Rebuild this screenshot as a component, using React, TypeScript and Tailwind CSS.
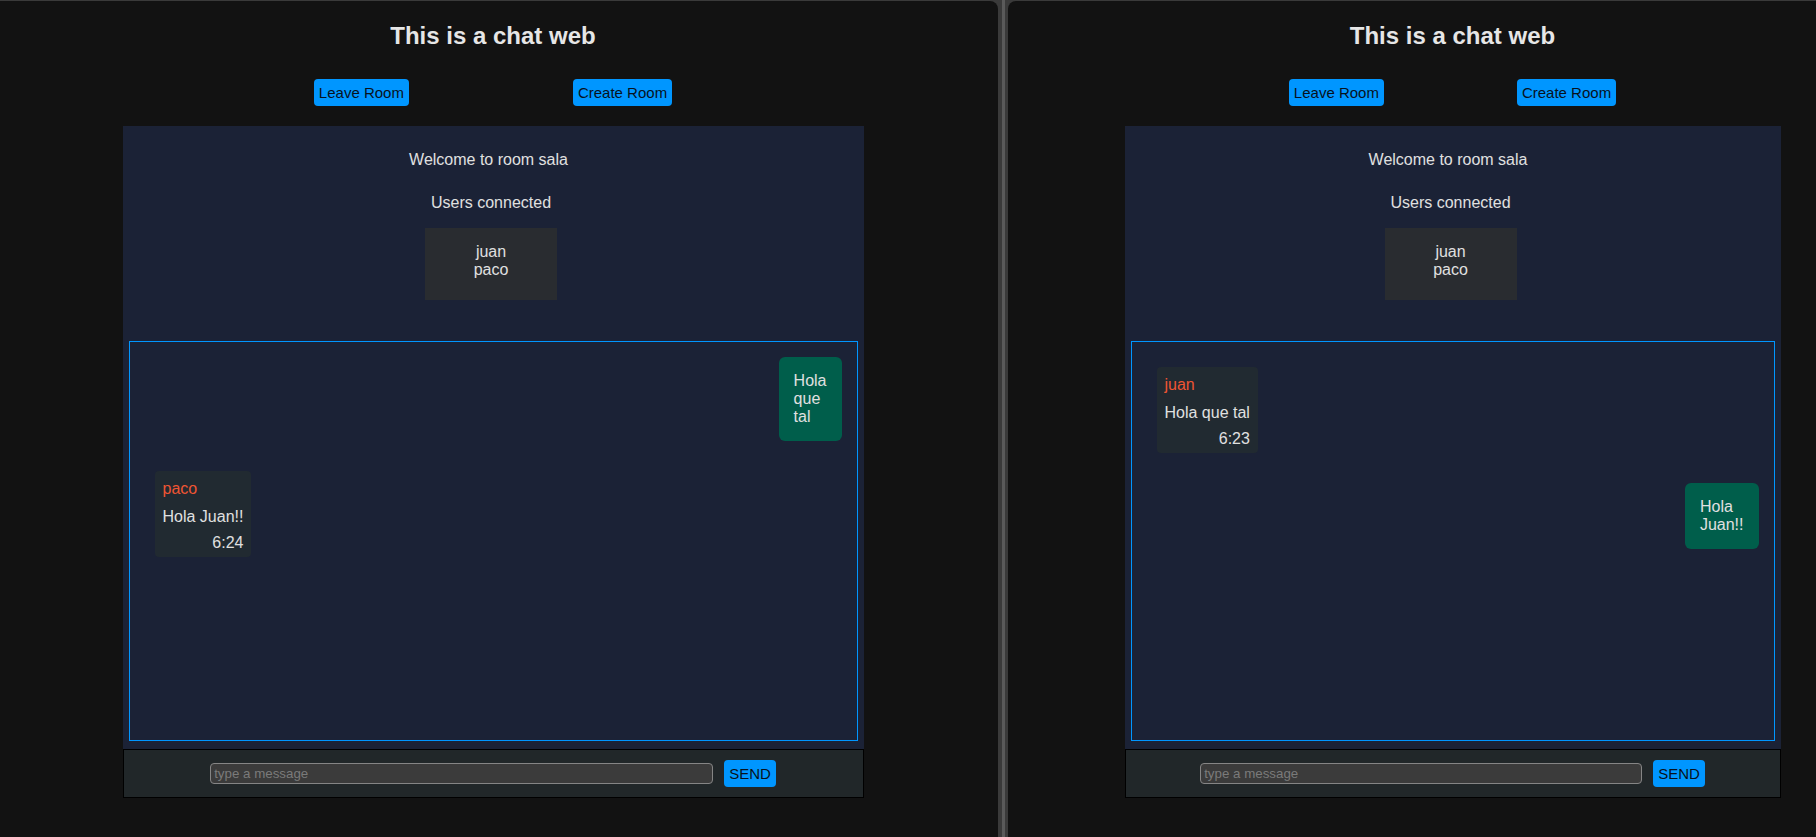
type Msg = { own: boolean; user?: string; text: string; time?: string };

// two browser windows side by side, the right one is cut off by the screen edge
const windows = [
  {
    key: 'juan',
    panel: 'w-[998px] rounded-tr-lg',
    inner: 'w-[986px]',
    btnGap: 'gap-[164px]',
    chat: 'w-[741px]',
    input: 'w-[503px]',
    messages: [
      { own: true, text: 'Hola que tal' },
      { own: false, user: 'paco', text: 'Hola Juan!!', time: '6:24' },
    ] as Msg[],
  },
  {
    key: 'paco',
    panel: 'w-[889px] rounded-tl-lg',
    inner: 'w-[889px]',
    btnGap: 'gap-[133px]',
    chat: 'w-[656px]',
    input: 'w-[442px]',
    messages: [
      { own: false, user: 'juan', text: 'Hola que tal', time: '6:23' },
      { own: true, text: 'Hola Juan!!' },
    ] as Msg[],
  },
];

const btn = 'h-[27px] rounded px-[5px] bg-[#0096ff] text-[15px] leading-none text-[#08121c]';

const Message = ({ msg }: { msg: Msg }) =>
  msg.own ? (
    <div className="self-end w-min rounded-md bg-[#005e4b] p-[15px] text-[#e0e0e0]">{msg.text}</div>
  ) : (
    <div className="self-start m-[10px] rounded bg-[#212a31] px-2 pt-[9px] pb-[5px]">
      <div className="text-[#ef5533]">{msg.user}</div>
      <div className="mt-[10px] whitespace-nowrap">{msg.text}</div>
      <div className="mt-2 text-right">{msg.time}</div>
    </div>
  );

const ChatWindow = ({ win }: { win: (typeof windows)[number] }) => (
  <div className={'shrink-0 bg-[#121212] ' + win.panel}>
    <div className={'flex flex-col items-center ' + win.inner}>
      <h2 className="mt-[21px] text-[24px] font-bold leading-[28px] text-[#e6e6e6]">This is a chat web</h2>

      <div className={'mt-[29px] flex ' + win.btnGap}>
        <button className={btn}>Leave Room</button>
        <button className={btn}>Create Room</button>
      </div>

      <div className={'mt-5 flex flex-col items-center bg-[#1b2236] pt-[25px] pb-2 text-[16px] leading-[18px] text-[#e0e0e0] ' + win.chat}>
        <p className="mr-[9px]">Welcome to room sala</p>
        <p className="mt-[25px] mr-1">Users connected</p>
        <div className="mt-4 mr-1 h-[72px] w-[132px] bg-[#292c30] pt-[15px] text-center">
          <div>juan</div>
          <div>paco</div>
        </div>

        {/* messages */}
        <div className="mt-[41px] flex h-[400px] flex-col gap-5 self-stretch mx-[6px] border border-[#0096ff] p-[15px]">
          {win.messages.map((m, i) => (
            <Message key={i} msg={m} />
          ))}
        </div>
      </div>

      <div className={'flex h-[49px] items-center justify-center gap-[11px] border border-black bg-[#212729] ' + win.chat}>
        <input
          type="text"
          placeholder="type a message"
          className={'h-[21px] rounded-sm border border-[#858585] bg-[#3b3b3b] px-[3px] text-[13.33px] text-[#ddd] placeholder:text-[#7a7a7a] outline-none ' + win.input}
        />
        <button className={btn}>SEND</button>
      </div>
    </div>
  </div>
);

export default function App() {
  return (
    <div className="flex h-[837px] w-[1816px] overflow-hidden bg-[#3a3a3a] pt-px font-['Liberation_Sans',Arial,sans-serif]">
      <ChatWindow win={windows[0]} />
      <div className="-mt-px flex w-[10px] shrink-0 justify-center">
        <div className="w-[3px] bg-[#5a5a5a]" />
      </div>
      <ChatWindow win={windows[1]} />
    </div>
  );
}
